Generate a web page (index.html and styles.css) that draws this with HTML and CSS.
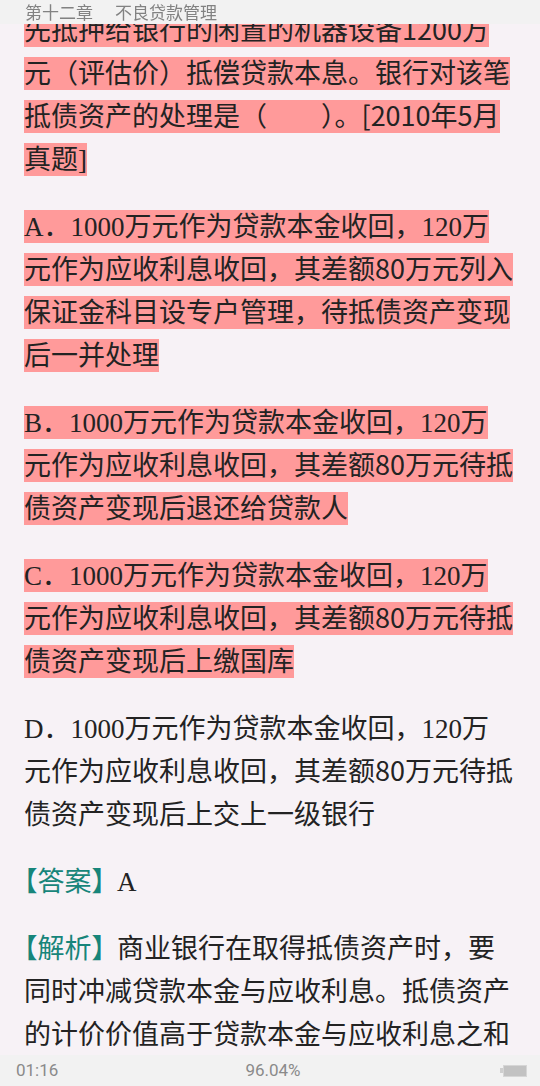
FILE: index.html
```html
<!DOCTYPE html>
<html lang="zh-CN">
<head>
    <meta charset="UTF-8">
    <meta name="viewport" content="width=device-width, initial-scale=1.0">
    <title>第十二章 不良贷款管理</title>
    <link rel="stylesheet" href="styles.css">
</head>
<body>
    <!-- 顶部章节栏，盖在正文上面 -->
    <header class="top_bar">
        <span>第十二章</span><span class="chapter">不良贷款管理</span>
    </header>

    <main class="reader">
        <p class="para"><span class="mark">先抵押给银行的闲置的机器设备<span class="sans">1200</span>万<br>元（评估价）抵偿贷款本息。银行对该笔<br>抵债资产的处理是（　　）。<span class="sans">[2010</span>年<span class="sans">5</span>月<br>真题]</span></p>

        <p class="para"><span class="mark">A．1000万元作为贷款本金收回，120万<br>元作为应收利息收回，其差额<span class="sans">80</span>万元列入<br>保证金科目设专户管理，待抵债资产变现<br>后一并处理</span></p>

        <p class="para"><span class="mark">B．1000万元作为贷款本金收回，120万<br>元作为应收利息收回，其差额<span class="sans">80</span>万元待抵<br>债资产变现后退还给贷款人</span></p>

        <p class="para"><span class="mark">C．1000万元作为贷款本金收回，120万<br>元作为应收利息收回，其差额<span class="sans">80</span>万元待抵<br>债资产变现后上缴国库</span></p>

        <p class="para">D．1000万元作为贷款本金收回，120万<br>元作为应收利息收回，其差额<span class="sans">80</span>万元待抵<br>债资产变现后上交上一级银行</p>

        <p class="para"><span class="label">【答案】</span>A</p>

        <p class="para"><span class="label">【解析】</span>商业银行在取得抵债资产时，要<br>同时冲减贷款本金与应收利息。抵债资产<br>的计价价值高于贷款本金与应收利息之和</p>
    </main>

    <!-- 底部状态栏：时间 / 进度 / 电量 -->
    <footer class="status_bar">
        <span class="time">01:16</span>
        <span class="progress">96.04%</span>
        <span class="battery"><i class="battery_body"></i></span>
    </footer>
</body>
</html>
```

FILE: styles.css
```css
html, body {
    margin: 0;
    height: 100%;
}
body {
    background-color: #f7f2f6;
    color: #232323;
    overflow: hidden;
}

/* 顶部章节栏 */
.top_bar {
    position: fixed;
    top: 0;
    left: 0;
    right: 0;
    height: 24px;
    padding-left: 25px;
    background-color: #f2f2f2;
    color: #828282;
    font: 17px/24px "Noto Sans CJK SC", sans-serif;
    z-index: 2;
}
.top_bar .chapter {
    margin-left: 22px;
}

/* 正文 */
.reader {
    padding: 10px 8px 0 24px;
}
.para {
    margin: 0 0 24px;
    font-family: "Liberation Serif", "Noto Sans CJK SC", serif;
    font-size: 27px;
    line-height: 43px;
    white-space: nowrap;
}
/* 划线高亮：每行单独一块 */
.mark {
    background-color: #ff9a9a;
    padding: 2px 0 1px;
}
/* 换字体的片段不撑高行框 */
.sans {
    font-family: "Noto Sans CJK SC", sans-serif;
    line-height: 1;
}
.label {
    font-family: "Noto Sans CJK SC", sans-serif;
    font-feature-settings: "halt";
    line-height: 1;
    color: #17857a;
    margin-right: 12px;
}

/* 底部状态栏 */
.status_bar {
    position: fixed;
    left: 0;
    right: 0;
    bottom: 0;
    height: 31px;
    padding: 0 13px 0 16px;
    display: grid;
    grid-template-columns: 1fr auto 1fr;
    align-items: center;
    background-color: #f2f2f2;
    color: #8a8a8a;
    font: 17px/31px Roboto, sans-serif;
    z-index: 2;
}
.progress {
    padding-left: 3px;
}
.battery {
    justify-self: end;
    display: flex;
    align-items: center;
}
.battery::before {
    content: '';
    width: 3px;
    height: 5px;
    background-color: #cfcfcf;
}
.battery_body {
    display: block;
    width: 22px;
    height: 10px;
    border: 1px solid #d6d6d6;
    background-color: #c2c2c2;
}
```
